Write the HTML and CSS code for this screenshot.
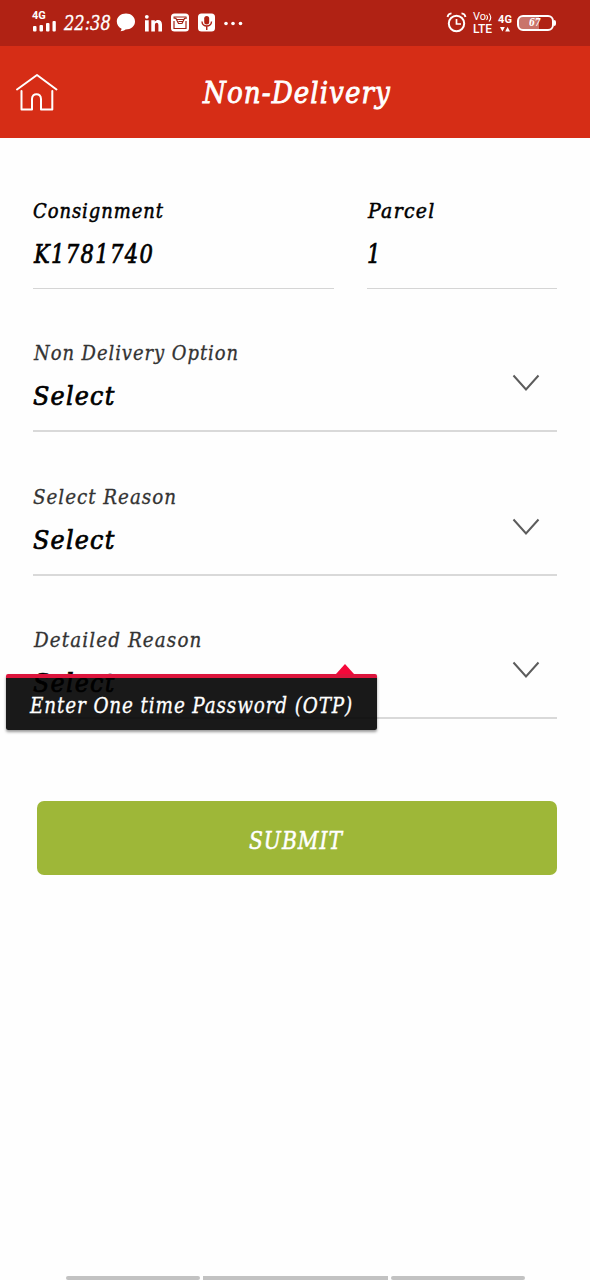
FILE: index.html
```html
<!DOCTYPE html>
<html lang="en">
<head>
<meta charset="utf-8">
<title>Non-Delivery</title>
<link rel="stylesheet" href="styles.css">
</head>
<body>
<div class="statusbar">
  <div class="network"><span class="net-label">4G</span><svg width="24" height="11" viewBox="0 0 24 11" fill="#fff"><rect x="1" y="5" width="3.500" height="5.500" rx="1"/><rect x="7.500" y="4" width="3.500" height="6.500" rx="1"/><rect x="14" y="2" width="3.500" height="8.500" rx="1"/><rect x="20.500" y="0" width="3.300" height="10.500" rx="1"/></svg></div>
  <span class="clock"><span class="t t-clock">22:38</span></span>
  <svg class="notices" width="132" height="24" viewBox="0 0 132 24">
    <path d="M10 2.500c-5.200 0-9.200 3.500-9.200 8 0 3.200 1.800 5.800 4.800 7.200-.1 1-.5 1.800-1.100 2.500 2 0 3.700-.5 5-1.700 5.500 0 9.500-3.400 9.500-8s-3.900-8-9-8z" fill="#fff"/>
    <circle cx="30.800" cy="5.800" r="1.900" fill="#fff"/><path d="M29 9.300h3.700V20.500H29zM35.300 9.300h3.500v1.500c1.700-2.700 7.200-2.600 7.200 2.700v7h-3.600v-6.300c0-3.200-3.500-3-3.500 0v6.300h-3.600z" fill="#fff"/>
    <rect x="55" y="2.500" width="18" height="18" rx="3.500" fill="#fff"/>
    <path d="M57.500 7l2.500.5 2.500 5h3.500l2.500-5 2.500-.5M58 10v7.500h12V10M57.500 6h13M61 8.500h6.500M62.500 10.500h4" fill="none" stroke="#a32114" stroke-width="1.200"/>
    <rect x="82" y="2.500" width="17" height="18" rx="3.500" fill="#fff"/>
    <rect x="88.200" y="5" width="5" height="8.500" rx="2.500" fill="#b02214"/><path d="M86 10.500c0 6 9.500 6 9.500 0M90.750 15v4" fill="none" stroke="#b02214" stroke-width="1.400"/>
    <circle cx="110" cy="12.500" r="1.800" fill="#fff"/><circle cx="117" cy="12.500" r="1.800" fill="#fff"/><circle cx="124.500" cy="12.500" r="1.800" fill="#fff"/>
  </svg>
  <div class="indicators">
    <svg width="22" height="22" viewBox="0 0 22 22" fill="none" stroke="#fff" stroke-width="2"><circle cx="10.500" cy="12.500" r="7.700"/><path d="M10.500 8v5h4.500" stroke-width="1.700"/><path d="M1.500 6c.3-2 2-3.500 4-3.700M19.500 6c-.3-2-2-3.500-4-3.700" stroke-width="1.800"/></svg>
    <div class="volte"><span class="volte-top">Vo<svg width="7" height="9" viewBox="0 0 7 9" fill="none" stroke="#fff" stroke-width="1.100"><path d="M.5 2q2 2.500 0 5M3 .5q3.500 4 0 8"/></svg></span><span class="volte-bottom">LTE</span></div>
    <div class="data"><span class="data-label">4G</span><svg width="10" height="5" viewBox="0 0 10 5" fill="#fff"><path d="M0 0h4.800L2.400 4.500zM5.200 4.500H10L7.600 0z"/></svg></div>
    <div class="battery"><span class="t t-batt">67</span></div>
  </div>
</div>
<header class="appbar">
  <svg class="home" width="44" height="42" viewBox="0 0 44 42" fill="none" stroke="#fff" stroke-width="2" stroke-linecap="round" stroke-linejoin="round"><path d="M2 18.500L22 4l19.500 14.500M6.500 20v18.500H17V28c0-6.500 9-6.500 9 0v10.500h11.300V20"/></svg>
  <h1 class="title"><span class="t t-title">Non-Delivery</span></h1>
</header>
<main class="form">
  <div class="row">
    <div class="field field-wide"><div class="label label-strong"><span class="t t-cons">Consignment</span></div><div class="value"><span class="t t-num">K1781740</span></div></div>
    <div class="field field-small"><div class="label label-strong"><span class="t t-parcel">Parcel</span></div><div class="value"><span class="t t-num t-one">1</span></div></div>
  </div>
  <div class="field dropdown"><div class="label"><span class="t t-option">Non Delivery Option</span></div><div class="value"><span class="t t-select">Select</span></div>
    <svg class="chevron" width="28" height="18" viewBox="0 0 28 18"><path d="M1.500 1.500L14 15.500 26.500 1.500"/></svg></div>
  <div class="field dropdown"><div class="label"><span class="t t-reason">Select Reason</span></div><div class="value"><span class="t t-select">Select</span></div>
    <svg class="chevron" width="28" height="18" viewBox="0 0 28 18"><path d="M1.500 1.500L14 15.500 26.500 1.500"/></svg></div>
  <div class="field dropdown"><div class="label"><span class="t t-detail">Detailed Reason</span></div><div class="value"><span class="t t-select">Select</span></div>
    <svg class="chevron" width="28" height="18" viewBox="0 0 28 18"><path d="M1.500 1.500L14 15.500 26.500 1.500"/></svg>
    <div class="tooltip"><span class="t t-tip">Enter One time Password (OTP)</span></div></div>
  <button class="submit"><span class="t t-submit">SUBMIT</span></button>
</main>
<div class="navhint"><span class="hint"></span><span class="hint hint-mid"></span><span class="hint"></span></div>
</body>
</html>
```
FILE: styles.css
```css
* { box-sizing: border-box; }
body { margin: 0; width: 590px; height: 1280px; display: flex; flex-direction: column; background: #fefefe; font-family: "DejaVu Serif Condensed", "DejaVu Serif", serif; font-stretch: condensed; font-style: italic; color: #000; overflow: hidden; }
svg { display: block; flex: none; }
.t { display: inline-block; white-space: pre; transform-origin: left center; }
.t-clock { transform: scaleX(.88); margin-left: 1px; -webkit-text-stroke: .3px; }
.t-title { transform: scaleX(.97); letter-spacing: 1.100px; }
.t-cons { transform: scaleX(.95); letter-spacing: 1px; }
.t-parcel { transform: scaleX(1); letter-spacing: 1.300px; margin-left: 1px; }
.t-num { transform: scaleX(.9); letter-spacing: 1.500px; margin-left: 1px; }
.t-one { margin-left: 0; }
.t-option { transform: scaleX(.95); letter-spacing: 1px; margin-left: 1px; }
.t-select { transform: scaleX(1.02); letter-spacing: 1.200px; }
.t-reason { transform: scaleX(.97); letter-spacing: 1px; }
.t-detail { transform: scaleX(.97); letter-spacing: 1.150px; margin-left: 1px; }
.t-tip { transform: scaleX(.93); letter-spacing: .93px; margin-left: 1px; }
.t-submit { transform: scaleX(.9); letter-spacing: 1.100px; }
.t-batt { transform: scaleX(.85); }

.statusbar { height: 46px; flex: none; background: #b02214; color: #fff; display: flex; padding: 11px 32px 0; }
.network { width: 31px; display: flex; flex-direction: column; font: bold 11px/10px Roboto, sans-serif; }
.clock { width: 53px; font-size: 20.500px; line-height: 25px; }
.indicators { margin-left: auto; width: 112px; display: flex; }
.volte { width: 24px; margin-left: 5px; font: 500 12px/12px Roboto, sans-serif; display: flex; flex-direction: column; }
.volte-top { display: flex; align-items: center; height: 12px; font-size: 11px; font-weight: 400; }
.volte-bottom { font-size: 12px; }
.data { width: 16px; display: flex; flex-direction: column; align-items: center; gap: 3px; padding-top: 4px; margin-right: 4px; font: bold 11px/9px Roboto, sans-serif; }
.battery { position: relative; width: 37px; height: 16px; flex: none; margin-top: 4px; border: 2px solid #fff; border-radius: 6px; background: linear-gradient(90deg, #c9746b 62%, #b02214 62%); font-size: 11px; font-weight: bold; line-height: 12px; padding-left: 10px; }
.battery::after { content: ""; position: absolute; right: -4px; top: 3px; width: 2px; height: 6px; border-radius: 0 2px 2px 0; background: #fff; }

.appbar { height: 92px; flex: none; background: #d62d16; color: #fff; display: flex; padding: 25px 0 0 15px; }
.title { margin: 1px 0 0 144px; font-size: 30px; line-height: 42px; font-weight: 400; -webkit-text-stroke: .8px; }

.form { padding: 55px 33px 0; flex: 1; }
.row { display: flex; gap: 33px; margin-bottom: 46px; }
.field { height: 96px; border-bottom: 1px solid #d5d5d5; }
.field-wide { width: 301px; }
.field-small { width: 190px; }
.label { font-size: 21px; line-height: 36px; color: #333; -webkit-text-stroke: .3px; }
.label-strong { color: #000; -webkit-text-stroke: .5px; }
.value { font-size: 26px; line-height: 51px; -webkit-text-stroke: .7px; }
.dropdown { position: relative; height: 97px; margin-bottom: 46px; border-bottom: 2px solid #d9d9d9; }
.dropdown + .dropdown { margin-top: 47px; }
.dropdown + .dropdown + .dropdown { margin-top: 46px; }
.chevron { position: absolute; right: 17px; top: 39px; fill: none; stroke: #5c5c5c; stroke-width: 2; }
.tooltip { position: absolute; left: -27px; top: 52px; width: 371px; height: 56px; background: rgba(0, 0, 0, .9); border-top: 4px solid #dc143c; border-radius: 2px; color: #fff; padding-left: 23px; font-size: 22px; line-height: 56px; -webkit-text-stroke: .3px; box-shadow: 0 2px 3px rgba(0, 0, 0, .4); }
.tooltip::before { content: ""; position: absolute; left: 330px; top: -14px; border: solid transparent; border-width: 0 9px 10px; border-bottom-color: #f5083a; }
.submit { display: block; width: 520px; height: 74px; margin: 82px 0 0 4px; border: 0; border-radius: 7px; background: #9eb738; color: #fff; font: inherit; font-size: 25px; padding: 4px 0 0 212px; text-align: left; -webkit-text-stroke: .5px; }
.navhint { display: flex; justify-content: center; gap: 3px; height: 5px; flex: none; padding-top: 1px; }
.hint { width: 134px; height: 4px; background: #c2c2c2; border-radius: 2px; }
.hint-mid { width: 185px; border-radius: 0; }
```
